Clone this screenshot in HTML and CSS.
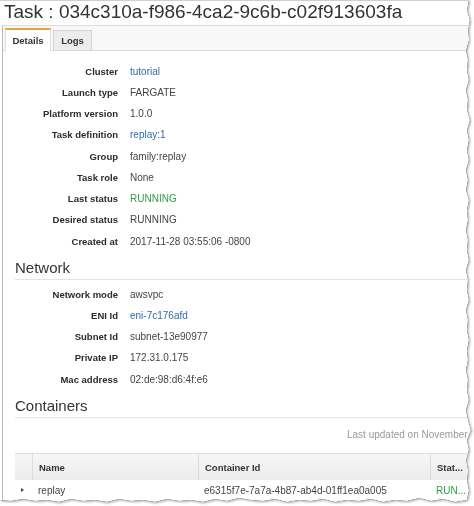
FILE: index.html
```html
<!DOCTYPE html>
<html>
<head>
<meta charset="utf-8">
<link rel="stylesheet" href="styles.css">
</head>
<body>
<div class="frame">
  <div class="sheet">
    <h1 class="title">Task : 034c310a-f986-4ca2-9c6b-c02f913603fa</h1>
    <div class="panel">
      <div class="tabs">
        <div class="tab active">Details</div>
        <div class="tab">Logs</div>
      </div>
      <div class="content">
        <div class="props">
          <div class="row"><span class="label">Cluster</span><span class="value link">tutorial</span></div>
          <div class="row"><span class="label">Launch type</span><span class="value">FARGATE</span></div>
          <div class="row"><span class="label">Platform version</span><span class="value">1.0.0</span></div>
          <div class="row"><span class="label">Task definition</span><span class="value link">replay:1</span></div>
          <div class="row"><span class="label">Group</span><span class="value">family:replay</span></div>
          <div class="row"><span class="label">Task role</span><span class="value">None</span></div>
          <div class="row"><span class="label">Last status</span><span class="value ok">RUNNING</span></div>
          <div class="row"><span class="label">Desired status</span><span class="value">RUNNING</span></div>
          <div class="row"><span class="label">Created at</span><span class="value">2017-11-28 03:55:06 -0800</span></div>
        </div>
        <h2 class="section">Network</h2>
        <div class="props net">
          <div class="row"><span class="label">Network mode</span><span class="value">awsvpc</span></div>
          <div class="row"><span class="label">ENI Id</span><span class="value link">eni-7c176afd</span></div>
          <div class="row"><span class="label">Subnet Id</span><span class="value">subnet-13e90977</span></div>
          <div class="row"><span class="label">Private IP</span><span class="value">172.31.0.175</span></div>
          <div class="row"><span class="label">Mac address</span><span class="value">02:de:98:d6:4f:e6</span></div>
        </div>
        <h2 class="section">Containers</h2>
        <div class="updated">Last updated on November 28, 2017 3:56:20 AM</div>
        <div class="grid">
          <div class="hcell first"></div>
          <div class="hcell">Name</div>
          <div class="hcell">Container Id</div>
          <div class="hcell">Stat...</div>
          <div class="cell first"><span class="caret"></span></div>
          <div class="cell">replay</div>
          <div class="cell">e6315f7e-7a7a-4b87-ab4d-01ff1ea0a005</div>
          <div class="cell ok">RUN...</div>
        </div>
      </div>
    </div>
  </div>
</div>
</body>
</html>
```

FILE: styles.css
```css
html, body {
  margin: 0;
  height: 100%;
  overflow: hidden;
  background: #fff;
}
body {
  font-family: "Liberation Sans", Arial, Helvetica, sans-serif;
  color: #444;
}
.frame {
  width: 474px;
  height: 506px;
  filter: drop-shadow(0.8px 0.8px 0.6px rgba(0, 0, 0, 0.95)) drop-shadow(1px 1px 1.2px rgba(0, 0, 0, 0.35));
}
.sheet {
  width: 474px;
  height: 506px;
  box-sizing: border-box;
  overflow: hidden;
  background: #fff;
  border-top: 1px solid #cfcfcf;
  clip-path: polygon(0 0, 469px 0, 467px 10px, 470px 20px, 468px 30px, 469px 40px, 466px 50px, 468px 60px, 467px 70px, 469px 80px, 466px 90px, 468px 100px, 467px 110px, 470px 120px, 467px 130px, 469px 140px, 467px 150px, 469px 160px, 466px 170px, 468px 180px, 466px 190px, 469px 200px, 467px 210px, 468px 220px, 466px 230px, 468px 240px, 467px 250px, 469px 260px, 466px 270px, 468px 280px, 467px 290px, 469px 300px, 466px 310px, 468px 320px, 467px 330px, 469px 340px, 467px 350px, 468px 360px, 466px 370px, 468px 380px, 467px 390px, 469px 400px, 466px 410px, 468px 420px, 471px 430px, 467px 440px, 469px 450px, 466px 460px, 468px 470px, 467px 480px, 469px 490px, 467px 500px, 455px 502px, 443px 499px, 431px 501px, 419px 498px, 407px 501px, 395px 500px, 383px 502px, 371px 499px, 359px 501px, 347px 500px, 335px 502px, 323px 499px, 311px 501px, 299px 500px, 287px 502px, 275px 499px, 263px 501px, 251px 500px, 239px 498px, 227px 501px, 215px 499px, 203px 502px, 191px 500px, 179px 501px, 167px 499px, 155px 502px, 143px 500px, 131px 501px, 119px 499px, 107px 502px, 95px 500px, 83px 501px, 71px 499px, 59px 502px, 47px 500px, 35px 501px, 23px 499px, 11px 501px, 0 500px);
}
.title {
  margin: 0;
  padding: 0 0 2px 4px;
  font-size: 19px;
  line-height: 22px;
  font-weight: normal;
  color: #333;
  white-space: nowrap;
}
.panel {
  margin-left: 2px;
  width: 540px;
  height: 490px;
  border-top: 1px solid #dcdcdc;
  border-left: 1px solid #b9b9b9;
}
.tabs {
  display: flex;
  align-items: flex-start;
  gap: 2px;
  height: 24px;
  padding-left: 2px;
  background: #f8f8f8;
  border-bottom: 1px solid #dcdcdc;
}
.tab {
  box-sizing: border-box;
  display: flex;
  align-items: center;
  justify-content: center;
  font-size: 9.5px;
  font-weight: bold;
  color: #333;
  margin-top: 4px;
  width: 39px;
  height: 20px;
  background: #ececec;
  border: 1px solid #d2d2d2;
  border-bottom: none;
}
.tab.active {
  margin-top: 2px;
  width: 46px;
  height: 23px;
  background: #fff;
  border: 1px solid #dcdcdc;
  border-top: 2px solid #e6a23c;
  border-bottom: none;
}
.content {
  padding: 9.4px 0 0 12px;
}
.row {
  display: grid;
  grid-template-columns: 103px auto;
  column-gap: 12px;
  align-items: center;
  height: 21.25px;
}
.label {
  text-align: right;
  font-size: 9.5px;
  font-weight: bold;
  color: #2b2b2b;
}
.value {
  font-size: 10px;
  color: #444;
}
.link {
  color: #2e6bab;
}
.ok {
  color: #2f9e44;
}
.section {
  margin: 7.5px 0 0;
  padding-bottom: 2px;
  font-size: 15px;
  line-height: 18px;
  font-weight: normal;
  color: #333;
  border-bottom: 1px solid #e3e3e3;
}
.net {
  margin-top: 3.4px;
}
.updated {
  padding: 10px 0 0 332px;
  margin-bottom: 11px;
  font-size: 10px;
  line-height: 14px;
  color: #9a9a9a;
  white-space: nowrap;
}
.grid {
  display: grid;
  grid-template-columns: 17px 166px 232px 1fr;
}
.hcell {
  height: 27px;
  box-sizing: border-box;
  display: flex;
  align-items: center;
  padding-left: 6px;
  font-size: 9.5px;
  font-weight: bold;
  color: #333;
  background: linear-gradient(#f6f6f6, #ececec);
  border-top: 1px solid #dedede;
  border-left: 1px solid #dcdcdc;
  white-space: nowrap;
}
.hcell.first {
  border-left: none;
  padding-left: 0;
}
.cell {
  height: 20px;
  display: flex;
  align-items: center;
  padding-left: 6px;
  font-size: 10px;
  white-space: nowrap;
}
.cell.first {
  padding-left: 6px;
}
.caret {
  width: 0;
  height: 0;
  border-top: 2.5px solid transparent;
  border-bottom: 2.5px solid transparent;
  border-left: 3.5px solid #444;
}
```
